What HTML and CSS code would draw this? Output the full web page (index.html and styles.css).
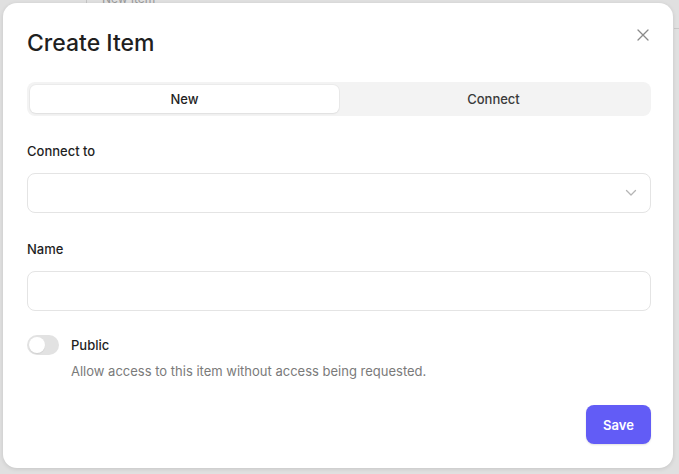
FILE: index.html
```html
<!DOCTYPE html>
<html lang="en">
<head>
<meta charset="utf-8">
<title>Create Item</title>
<link rel="stylesheet" href="styles.css">
</head>
<body>
<div class="backdrop">
  <div class="bg-rail"></div>
  <div class="bg-text">New item</div>
  <div class="bg-line"></div>
</div>
<div class="stage">
  <div class="modal">
    <div class="modal-head">
      <h1 class="title">Create Item</h1>
      <button class="close" aria-label="Close">
        <svg width="12" height="12" viewBox="0 0 12 12"><path d="M1 1 L11 11 M11 1 L1 11" stroke="#8a8a8a" stroke-width="1.3" fill="none" stroke-linecap="round"/></svg>
      </button>
    </div>
    <div class="tabs">
      <div class="tab active">New</div>
      <div class="tab">Connect</div>
    </div>
    <label class="label first">Connect to</label>
    <div class="field select">
      <svg class="chev" width="12" height="8" viewBox="0 0 12 8"><path d="M1.5 1.5 L6 6 L10.5 1.5" stroke="#b5b5b5" stroke-width="1.3" fill="none" stroke-linecap="round" stroke-linejoin="round"/></svg>
    </div>
    <label class="label">Name</label>
    <div class="field"></div>
    <div class="toggle-row">
      <div class="switch"><div class="knob"></div></div>
      <div class="toggle-text">
        <div class="toggle-title">Public</div>
        <div class="toggle-desc">Allow access to this item without access being requested.</div>
      </div>
    </div>
    <div class="footer">
      <button class="save">Save</button>
    </div>
  </div>
</div>
</body>
</html>
```

FILE: styles.css
```css
* { box-sizing: border-box; }
html, body { margin: 0; padding: 0; }
body {
  width: 679px;
  height: 474px;
  background: #e0e0e0;
  font-family: Inter, "Noto Sans", "Liberation Sans", sans-serif;
  color: #1f1f1f;
  position: relative;
  overflow: hidden;
}
.backdrop { position: absolute; inset: 0; }
.bg-rail { position: absolute; left: 86px; top: 0; width: 1px; height: 6px; background: #c4c4c4; }
.bg-text { position: absolute; left: 102px; top: -8px; font-size: 12px; line-height: 14px; color: #9a9a9a; }
.bg-line { position: absolute; left: 674px; top: 28px; width: 5px; height: 1px; background: #c8c8c8; }
.stage {
  position: relative;
  padding: 3px 6px 6px 3px;
  height: 474px;
}
.modal {
  width: 670px;
  height: 465px;
  background: #fff;
  border-radius: 14px;
  box-shadow: 0 1px 4px rgba(0,0,0,0.12);
  padding: 26px 22px 24px 24px;
  display: flex;
  flex-direction: column;
}
.modal-head {
  display: flex;
  align-items: center;
  justify-content: space-between;
  height: 28px;
}
.title {
  margin: 0;
  font-size: 23px;
  line-height: 28px;
  font-weight: 500;
  color: #1f1f1f;
  letter-spacing: 0;
}
.close {
  border: 0;
  background: none;
  padding: 0;
  width: 12px;
  height: 12px;
  margin-right: 2px;
  margin-top: -16px;
  display: flex;
}
.tabs {
  margin-top: 25px;
  height: 34px;
  background: #f3f3f3;
  border-radius: 8px;
  padding: 3px;
  display: grid;
  grid-template-columns: 1fr 1fr;
}
.tab {
  display: flex;
  align-items: center;
  justify-content: center;
  font-size: 13px;
  font-weight: 500;
  color: #3a3a3a;
  border-radius: 6px;
}
.tab.active {
  background: #fff;
  color: #1f1f1f;
  box-shadow: 0 0 0 1px rgba(0,0,0,0.03), 0 1px 2px rgba(0,0,0,0.05);
}
.label {
  display: block;
  margin-top: 26px;
  font-size: 13px;
  line-height: 20px;
  font-weight: 500;
  color: #1f1f1f;
}
.label.first { margin-top: 25px; }
.field {
  margin-top: 12px;
  height: 40px;
  border: 1px solid #e4e4e4;
  border-radius: 8px;
  background: #fff;
  display: flex;
  align-items: center;
  justify-content: flex-end;
  padding-right: 13px;
}
.toggle-row {
  margin-top: 24px;
  display: flex;
  gap: 12px;
}
.switch {
  width: 32px;
  height: 20px;
  border-radius: 10px;
  background: #e2e2e2;
  padding: 2px;
  flex: none;
}
.knob {
  width: 16px;
  height: 16px;
  border-radius: 50%;
  background: #fff;
  box-shadow: 0 1px 1px rgba(0,0,0,0.08);
}
.toggle-title {
  font-size: 13px;
  line-height: 20px;
  font-weight: 500;
  color: #1f1f1f;
}
.toggle-desc {
  margin-top: 6px;
  font-size: 13px;
  line-height: 20px;
  color: #7a7a7a;
}
.footer {
  margin-top: auto;
  display: flex;
  justify-content: flex-end;
}
.save {
  width: 65px;
  height: 39px;
  border: 0;
  border-radius: 8px;
  background: #625cf6;
  color: #fff;
  font-family: inherit;
  font-size: 13px;
  font-weight: 600;
  box-shadow: 0 1px 2px rgba(0,0,0,0.12);
}
```
